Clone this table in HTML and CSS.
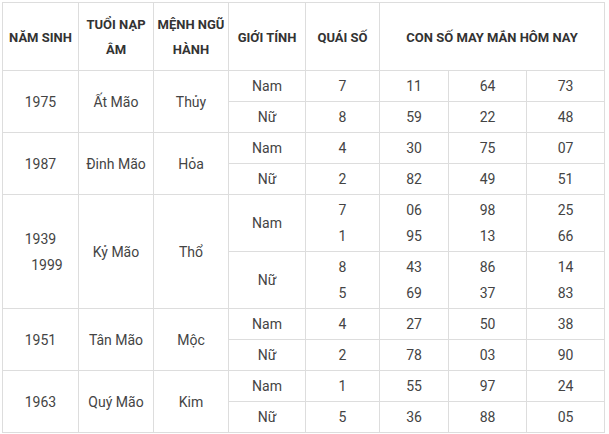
FILE: index.html
```html
<!DOCTYPE html>
<html lang="vi">
<head>
<meta charset="utf-8">
<link rel="stylesheet" href="styles.css">
</head>
<body>
<table class="lucky">
  <colgroup>
    <col class="c1"><col class="c2"><col class="c3"><col class="c4"><col class="c5"><col class="c6"><col class="c7"><col class="c8">
  </colgroup>
  <thead>
    <tr>
      <th>NĂM SINH</th>
      <th>TUỔI NẠP ÂM</th>
      <th>MỆNH NGŨ HÀNH</th>
      <th>GIỚI TÍNH</th>
      <th>QUÁI SỐ</th>
      <th colspan="3">CON SỐ MAY MẮN HÔM NAY</th>
    </tr>
  </thead>
  <tbody>
    <tr><td rowspan="2">1975</td><td rowspan="2">Ất Mão</td><td rowspan="2">Thủy</td><td>Nam</td><td>7</td><td>11</td><td>64</td><td>73</td></tr>
    <tr><td>Nữ</td><td>8</td><td>59</td><td>22</td><td>48</td></tr>
    <tr><td rowspan="2">1987</td><td rowspan="2">Đinh Mão</td><td rowspan="2">Hỏa</td><td>Nam</td><td>4</td><td>30</td><td>75</td><td>07</td></tr>
    <tr><td>Nữ</td><td>2</td><td>82</td><td>49</td><td>51</td></tr>
    <tr><td rowspan="2">1939<br><span class="indent">1999</span></td><td rowspan="2">Kỷ Mão</td><td rowspan="2">Thổ</td><td>Nam</td><td>7<br>1</td><td>06<br>95</td><td>98<br>13</td><td>25<br>66</td></tr>
    <tr><td>Nữ</td><td>8<br>5</td><td>43<br>69</td><td>86<br>37</td><td>14<br>83</td></tr>
    <tr><td rowspan="2">1951</td><td rowspan="2">Tân Mão</td><td rowspan="2">Mộc</td><td>Nam</td><td>4</td><td>27</td><td>50</td><td>38</td></tr>
    <tr><td>Nữ</td><td>2</td><td>78</td><td>03</td><td>90</td></tr>
    <tr><td rowspan="2">1963</td><td rowspan="2">Quý Mão</td><td rowspan="2">Kim</td><td>Nam</td><td>1</td><td>55</td><td>97</td><td>24</td></tr>
    <tr><td>Nữ</td><td>5</td><td>36</td><td>88</td><td>05</td></tr>
  </tbody>
</table>
</body>
</html>
```
FILE: styles.css
```css
html, body {
  margin: 0;
  padding: 0;
  background: #fff;
}
body {
  padding: 2px 0 0 2px;
  font-family: Roboto, "Liberation Sans", sans-serif;
  color: #444;
}
.lucky {
  border-collapse: collapse;
  table-layout: fixed;
  width: 602px;
  font-size: 14px;
}
.c1 { width: 76px; }
.c2 { width: 75px; }
.c3 { width: 75px; }
.c4 { width: 77px; }
.c5 { width: 74px; }
.c6 { width: 69px; }
.c7 { width: 78px; }
.c8 { width: 78px; }
.lucky th, .lucky td {
  border: 1px solid #ddd;
  text-align: center;
  vertical-align: middle;
  line-height: 26px;
  padding: 2px 4px;
}
.lucky th {
  font-weight: 700;
  color: #333;
  font-size: 13px;
  line-height: 25px;
  padding: 9px 1px 8px;
}
.indent {
  padding-left: 13px;
}
```
